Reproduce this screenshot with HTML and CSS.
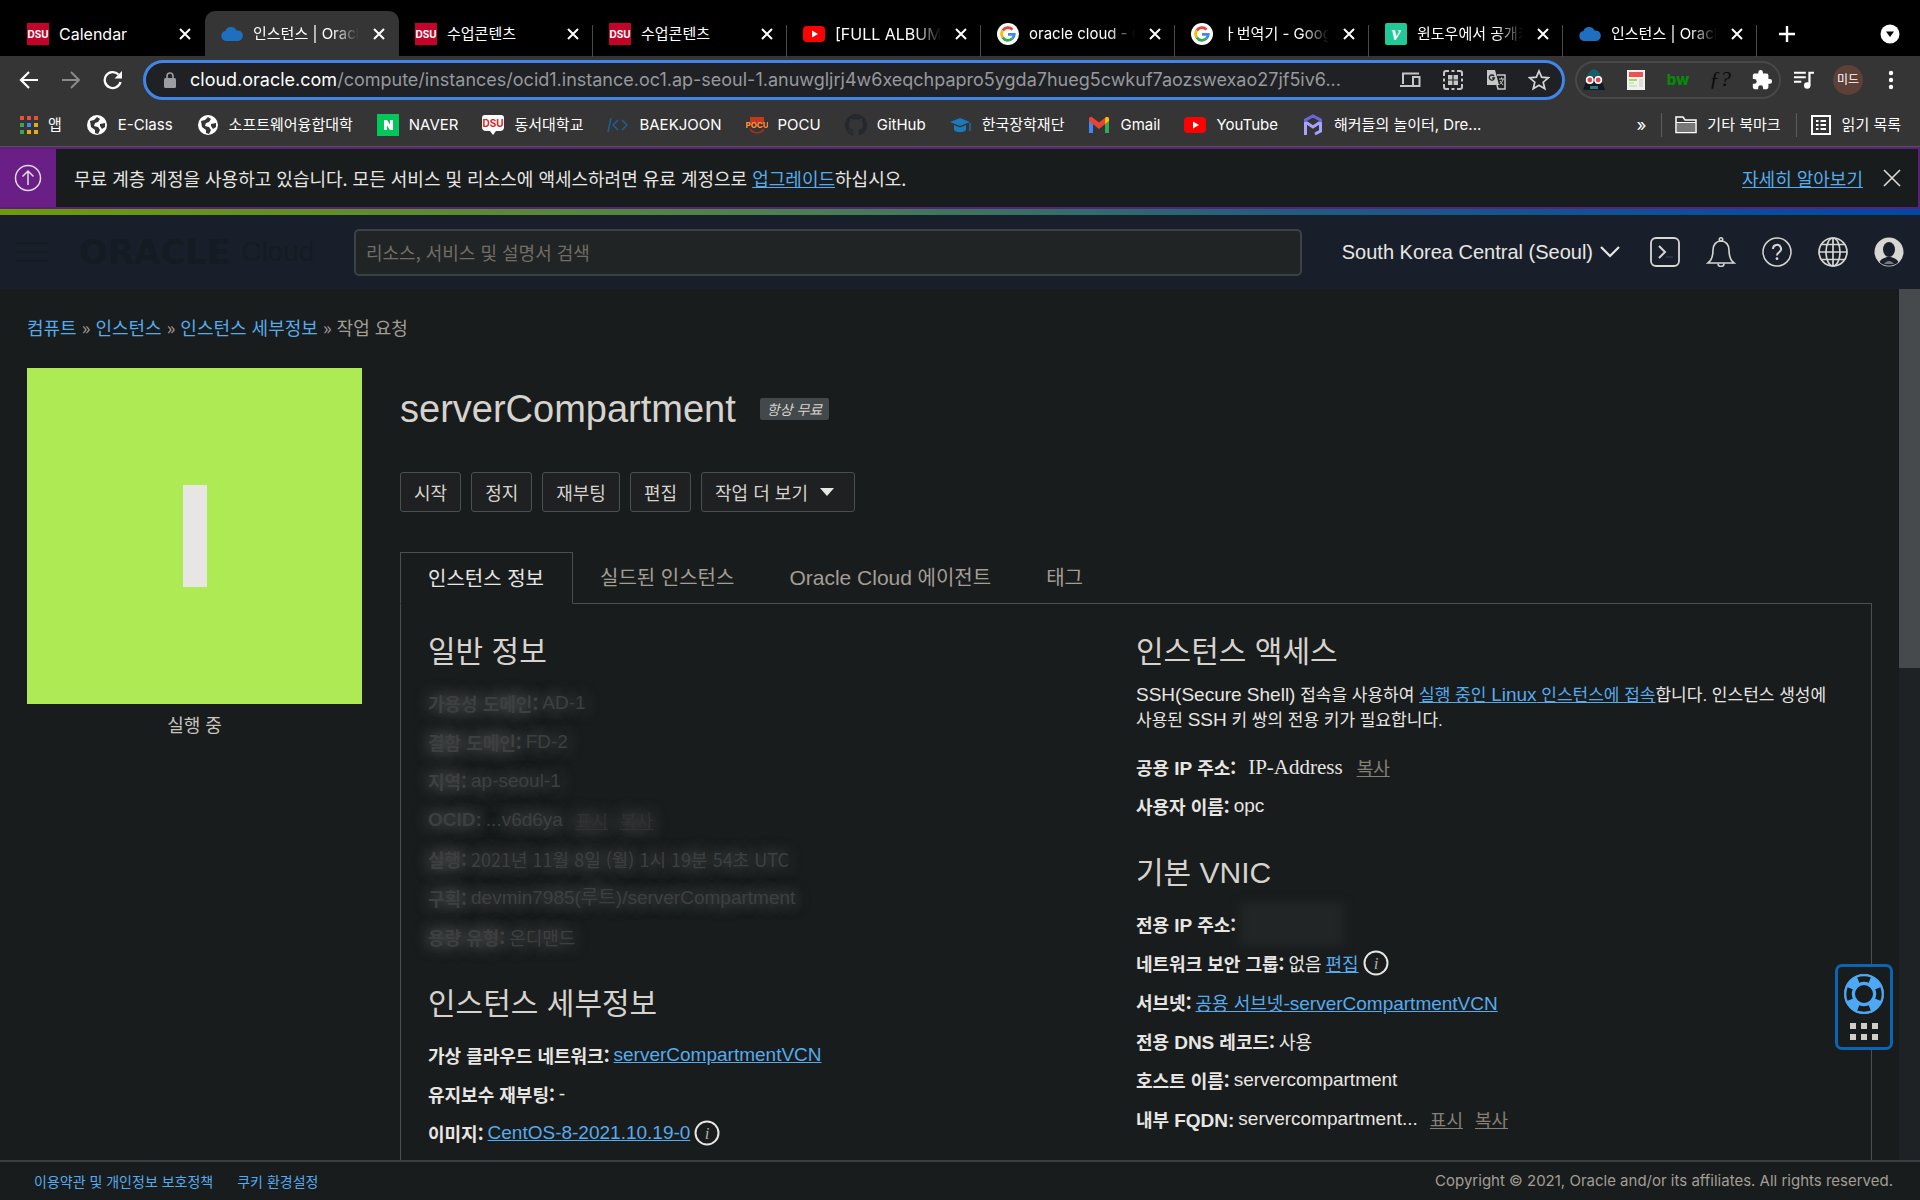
FILE: index.html
```html
<!DOCTYPE html>
<html lang="ko">
<head>
<meta charset="utf-8">
<title>인스턴스 | Oracle Cloud</title>
<meta name="viewport" content="width=device-width, initial-scale=1">
<link rel="stylesheet" href="styles.css">
</head>
<body>
<svg class="defs" aria-hidden="true">
  <symbol id="x" viewBox="0 0 12 12"><path d="M1 1l10 10M11 1L1 11" stroke="currentColor" stroke-width="2" fill="none"/></symbol>
  <symbol id="cloud" viewBox="0 0 22 22"><path d="M5 18a5 5 0 0 1-.6-9.900A6 6 0 0 1 15.500 7.500 5.300 5.300 0 0 1 17.500 18z" fill="#1f6fc0"/></symbol>
  <symbol id="dsu" viewBox="0 0 22 22"><path d="M0 0h22v22H0z" fill="#c4032b"/><text x="11" y="15" text-anchor="middle" font-size="10" font-weight="700" fill="#fff">DSU</text></symbol>
  <symbol id="youtube" viewBox="0 0 22 22"><rect y="3" width="22" height="16" rx="4" fill="#f00"/><path d="M9 7.500l6 3.500-6 3.500z" fill="#fff"/></symbol>
  <symbol id="google" viewBox="0 0 22 22"><circle cx="11" cy="11" r="11" fill="#fff"/><g fill="none" stroke-width="2.800"><path d="M5.700 7.500A6.300 6.300 0 0 1 15.500 6.600" stroke="#ea4335"/><path d="M5.700 14.500a6.300 6.300 0 0 1 0-7" stroke="#fbbc05"/><path d="M15.300 15.600a6.300 6.300 0 0 1-9.600-1.100" stroke="#34a853"/><path d="M11 11.300h6.300a6.300 6.300 0 0 1-2 4.300" stroke="#4285f4"/></g></symbol>
  <symbol id="globe-solid" viewBox="0 0 22 22"><circle cx="11" cy="11" r="10" fill="#fff"/><path d="M4 7l4-1 3-3 3 2-2 3-3 1-1 3 4 1 2 3-2 4-3-1v-3l-4-3zM14 10l5-1v4l-3 2-2-3z" fill="#353535"/></symbol>
  <symbol id="info" viewBox="0 0 26 26"><circle cx="13" cy="13" r="11.500" fill="none" stroke="#e8e6e3" stroke-width="2"/><text x="13" y="19" text-anchor="middle" font-family="Liberation Serif, serif" font-style="italic" font-size="17" fill="#b0aba3">i</text></symbol>
</svg>

<header class="browser">
  <nav class="tabs" aria-label="탭">
    <div class="tab latin"><svg class="fav"><use href="#dsu"/></svg><span class="title">Calendar</span><button class="close" aria-label="닫기"><svg><use href="#x"/></svg></button></div>
    <div class="tab active"><svg class="fav"><use href="#cloud"/></svg><span class="title fade">인스턴스 | Oracle Cloud</span><button class="close" aria-label="닫기"><svg><use href="#x"/></svg></button></div>
    <div class="tab line"><svg class="fav"><use href="#dsu"/></svg><span class="title">수업콘텐츠</span><button class="close" aria-label="닫기"><svg><use href="#x"/></svg></button></div>
    <div class="tab line"><svg class="fav"><use href="#dsu"/></svg><span class="title">수업콘텐츠</span><button class="close" aria-label="닫기"><svg><use href="#x"/></svg></button></div>
    <div class="tab line latin"><svg class="fav"><use href="#youtube"/></svg><span class="title fade">[FULL ALBUM]</span><button class="close" aria-label="닫기"><svg><use href="#x"/></svg></button></div>
    <div class="tab line"><svg class="fav"><use href="#google"/></svg><span class="title fade">oracle cloud - Google</span><button class="close" aria-label="닫기"><svg><use href="#x"/></svg></button></div>
    <div class="tab line"><svg class="fav"><use href="#google"/></svg><span class="title fade">ㅏ번역기 - Google 검색</span><button class="close" aria-label="닫기"><svg><use href="#x"/></svg></button></div>
    <div class="tab line"><svg class="fav" viewBox="0 0 22 22"><rect width="22" height="22" rx="2" fill="#20c997"/><text x="11" y="17" text-anchor="middle" font-family="Liberation Serif, serif" font-style="italic" font-weight="700" font-size="20" fill="#fff">v</text></svg><span class="title fade">윈도우에서 공개키 생성</span><button class="close" aria-label="닫기"><svg><use href="#x"/></svg></button></div>
    <div class="tab line"><svg class="fav"><use href="#cloud"/></svg><span class="title fade">인스턴스 | Oracle Cloud</span><button class="close" aria-label="닫기"><svg><use href="#x"/></svg></button></div>
    <button class="newtab" aria-label="새 탭"><svg viewBox="0 0 16 16"><path d="M8 0v16M0 8h16" stroke="#fff" stroke-width="2.400"/></svg></button>
    <button class="tabsearch" aria-label="탭 검색"><svg viewBox="0 0 20 20"><circle cx="10" cy="10" r="9.500" fill="#fff"/><path d="M6 7.500h8l-4 5.500z" fill="#000"/></svg></button>
  </nav>

  <div class="toolbar">
    <button aria-label="뒤로"><svg viewBox="0 0 20 20"><path d="M19 10H2M10 2l-8 8 8 8" fill="none" stroke="#fff" stroke-width="2.200"/></svg></button>
    <button aria-label="앞으로"><svg viewBox="0 0 20 20"><path d="M1 10h17M10 2l8 8-8 8" fill="none" stroke="#8b8b8b" stroke-width="2"/></svg></button>
    <button aria-label="새로고침"><svg viewBox="0 0 20 20"><path d="M17.500 12A8 8 0 1 1 15.500 4.500" fill="none" stroke="#fff" stroke-width="2.300"/><path d="M19 1v7.500h-7.500z" fill="#fff"/></svg></button>
    <div class="omnibox">
      <svg class="lock" viewBox="0 0 12 16"><path d="M3 7V4a3 3 0 0 1 6 0v3" fill="none" stroke="#9a9da1" stroke-width="1.600"/><rect y="6" width="12" height="10" rx="1.500" fill="#9a9da1"/></svg>
      <div class="url"><span class="host">cloud.oracle.com</span>/compute/instances/ocid1.instance.oc1.ap-seoul-1.anuwgljrj4w6xeqchpapro5ygda7hueg5cwkuf7aozswexao27jf5iv6...</div>
      <svg viewBox="0 0 22 22"><path d="M4 15V4.500h16M1 17h12" fill="none" stroke="#c4c7c5" stroke-width="2"/><rect x="14" y="8" width="6.500" height="9" fill="none" stroke="#c4c7c5" stroke-width="2"/></svg>
      <svg viewBox="0 0 22 22"><g fill="none" stroke="#c4c7c5" stroke-width="2"><path d="M2 7V4a2 2 0 0 1 2-2h3M15 2h3a2 2 0 0 1 2 2v3M20 15v3a2 2 0 0 1-2 2h-3M7 20H4a2 2 0 0 1-2-2v-3M9.500 2h3M9.500 20h3M2 9.500v3M20 9.500v3"/></g><path d="M6 6h4.400v4.400H6zM11.600 6H16v4.400h-4.400zM6 11.600h4.400V16H6zM11.600 11.600H16V16h-4.400z" fill="#c4c7c5"/></svg>
      <svg viewBox="0 0 22 22"><path d="M2 1h8l4 15H2z" fill="#c4c7c5"/><path d="M12 6h8v14h-7l-1-4" fill="none" stroke="#c4c7c5" stroke-width="1.500"/><path d="M14 10h5M16.500 8.500V10M18 10c-.5 3-2 4-3.500 5.500M15 12l3 4" stroke="#c4c7c5" fill="none"/><path d="M9 7a2.600 2.600 0 1 0 .5 2H7" fill="none" stroke="#202124" stroke-width="1.300"/></svg>
      <svg viewBox="0 0 22 22"><path d="M11 2l2.600 6.200 6.700.6-5.100 4.400 1.600 6.600-5.800-3.500-5.800 3.500 1.600-6.600-5.100-4.400 6.700-.6z" fill="none" stroke="#d5d7d6" stroke-width="1.700"/></svg>
    </div>
    <div class="extensions">
      <svg viewBox="0 0 22 22"><path d="M11 0c5 0 7 5 7 10l4 11H0L4 10C4 5 6 0 11 0z" fill="#0c1c22"/><path d="M11 0c4 0 6.500 4 7 8H4c.5-4 3-8 7-8z" fill="#1d5a63"/><circle cx="6.800" cy="11" r="4" fill="#fff"/><circle cx="15.200" cy="11" r="4" fill="#fff"/><circle cx="6.800" cy="11" r="2.400" fill="#e5484b"/><circle cx="15.200" cy="11" r="2.400" fill="#e5484b"/><path d="M8 17v3M10 17v3M12 17v3M14 17v3" stroke="#69c7e0"/></svg>
      <svg viewBox="0 0 22 22"><path d="M2 1h18v20H2z" fill="#f1f1ee"/><path d="M4 3h14v5H4z" fill="#ef5350"/><path d="M4 11h8" stroke="#a0d860" stroke-width="2"/><path d="M4 14h5M4 17h8" stroke="#b9d99a"/><path d="M14 10h4v8h-4z" fill="#dcdcdc"/></svg>
      <svg viewBox="0 0 22 22"><text x="11" y="16" text-anchor="middle" font-size="15" font-weight="800" fill="#088a08">bw</text></svg>
      <svg viewBox="0 0 22 22"><text x="11" y="17" text-anchor="middle" font-size="22" font-family="Liberation Serif, serif" font-style="italic" fill="#0c0c0c">ƒ?</text></svg>
      <svg viewBox="0 0 24 24"><path d="M20.500 11H19V7a2 2 0 0 0-2-2h-4V3.500a2.500 2.500 0 0 0-5 0V5H4a2 2 0 0 0-2 2v3.800h1.500a2.700 2.700 0 0 1 0 5.400H2V20a2 2 0 0 0 2 2h3.800v-1.500a2.700 2.700 0 0 1 5.400 0V22H17a2 2 0 0 0 2-2v-4h1.500a2.500 2.500 0 0 0 0-5z" fill="#fff"/></svg>
    </div>
    <button aria-label="미디어"><svg viewBox="0 0 22 22"><path d="M0 3h13M0 8h13M0 13h8" stroke="#fff" stroke-width="2.200"/><path d="M17 17V3h5" fill="none" stroke="#fff" stroke-width="2.400"/><circle cx="14.500" cy="17" r="3.500" fill="#fff"/></svg></button>
    <button class="avatar">미드</button>
    <button class="dots" aria-label="메뉴"><svg viewBox="0 0 6 22"><circle cx="3" cy="4" r="2.200" fill="#fff"/><circle cx="3" cy="11" r="2.200" fill="#fff"/><circle cx="3" cy="18" r="2.200" fill="#fff"/></svg></button>
  </div>

  <nav class="bookmarks" aria-label="북마크">
    <a href="#"><svg class="apps" viewBox="0 0 18 20"><path d="M0 1h4v4H0zM7 1h4v4H7zM14 1h4v4h-4z" fill="#e8503a"/><path d="M0 8h4v4H0zM0 15h4v4H0z" fill="#34a853"/><path d="M7 8h4v4H7z" fill="#4285f4"/><path d="M14 8h4v4h-4zM7 15h4v4H7zM14 15h4v4h-4z" fill="#e3ac1a"/></svg>앱</a>
    <a href="#"><svg><use href="#globe-solid"/></svg>E-Class</a>
    <a href="#"><svg><use href="#globe-solid"/></svg>소프트웨어융합대학</a>
    <a href="#"><svg viewBox="0 0 22 22"><path d="M0 0h22v22H0z" fill="#03c75a"/><path d="M7 16V6h3l3 4.600V6h3v10h-3l-3-4.600V16z" fill="#fff"/></svg>NAVER</a>
    <a href="#"><svg viewBox="0 0 22 22"><path d="M3 1h16a3 3 0 0 1 3 3v9a4 4 0 0 1-4 4h-4l-3 4-3-4H4a4 4 0 0 1-4-4V4a3 3 0 0 1 3-3z" fill="#fff"/><text x="11" y="13" text-anchor="middle" font-size="10" font-weight="700" fill="#d9251c">DSU</text></svg>동서대학교</a>
    <a href="#"><svg viewBox="0 0 22 22"><path d="M4 4L1 18M11 6l-5 5 5 5M15 6l5 5-5 5" fill="none" stroke="#1f5c92" stroke-width="1.600"/></svg>BAEKJOON</a>
    <a href="#"><svg viewBox="0 0 22 22"><path d="M4 3h14v6H4z" fill="#c8361a"/><path d="M4 15c3 5 11 5 14 0" fill="none" stroke="#a8301a" stroke-width="1.500"/><text x="11" y="14" text-anchor="middle" font-size="8" font-weight="800" fill="#ff8a3c">POCU</text></svg>POCU</a>
    <a href="#"><svg viewBox="0 0 16 16"><path d="M8 0C3.580 0 0 3.580 0 8c0 3.540 2.290 6.530 5.470 7.590.4.070.55-.17.55-.38 0-.19-.01-.82-.01-1.490-2.010.37-2.530-.49-2.690-.94-.09-.23-.48-.94-.82-1.130-.28-.15-.68-.52-.01-.53.63-.01 1.080.58 1.230.82.720 1.210 1.870.87 2.330.66.070-.52.280-.87.510-1.070-1.780-.2-3.640-.89-3.640-3.950 0-.87.310-1.590.82-2.150-.08-.2-.36-1.020.08-2.120 0 0 .67-.21 2.200.82a7.600 7.600 0 0 1 4 0c1.530-1.040 2.200-.82 2.200-.82.44 1.100.16 1.920.08 2.120.51.560.82 1.270.82 2.150 0 3.070-1.870 3.750-3.650 3.950.29.25.54.730.54 1.480 0 1.070-.01 1.930-.01 2.200 0 .21.150.46.55.38A8 8 0 0 0 16 8c0-4.420-3.580-8-8-8z" fill="#24292e"/></svg>GitHub</a>
    <a href="#"><svg viewBox="0 0 22 22"><path d="M0 8l10-4 10 4-10 4z" fill="#1f78b8"/><path d="M4 11v5c3 3 9 3 12 0v-5l-6 2.500z" fill="#1f78b8"/><path d="M20 9v8" stroke="#1f5f94" stroke-width="2"/></svg>한국장학재단</a>
    <a href="#"><svg viewBox="0 0 22 22"><path d="M1 19V5l4 3v11z" fill="#4285f4"/><path d="M17 19V8l4-3v14z" fill="#34a853"/><path d="M1 7V5a2 2 0 0 1 3.500-1.500L11 8.500l6.500-5A2 2 0 0 1 21 5v2l-10 8z" fill="#ea4335"/><path d="M17 4l1-.8A2 2 0 0 1 21 5v2l-4 3z" fill="#fbbc04"/></svg>Gmail</a>
    <a href="#"><svg><use href="#youtube"/></svg>YouTube</a>
    <a href="#"><svg viewBox="0 0 22 22"><path d="M3.500 21V8L11 13l7.500-5v9L13 20" fill="none" stroke="#a7a2fb" stroke-width="3"/><path d="M3.500 8V6L11 2l7.500 4v2" fill="none" stroke="#6a66dd" stroke-width="3"/></svg>해커들의 놀이터, Dre...</a>
    <button class="more" aria-label="북마크 더보기">»</button>
    <a class="sep" href="#"><svg viewBox="0 0 22 22"><path d="M1 18.500V3h7l2 3h11v12.500z" fill="none" stroke="#fff" stroke-width="1.500"/><path d="M2 9h18v9H2z" fill="#777"/><path d="M1 8.500h20" stroke="#fff"/></svg>기타 북마크</a>
    <a class="sep" href="#"><svg viewBox="0 0 22 22"><rect x="2" y="2" width="18" height="18" fill="none" stroke="#fff" stroke-width="2"/><path d="M6 7h2.500M6 11h2.500M6 15h2.500M10.500 7H16M10.500 11H16M10.500 15H16" stroke="#fff" stroke-width="2"/></svg>읽기 목록</a>
  </nav>
</header>

<aside class="banner">
  <div class="banner-icon"><svg viewBox="0 0 28 28"><g fill="none" stroke="#e6d9ec" stroke-width="1.500"><circle cx="14" cy="14" r="12.500"/><path d="M14 21V7M8.500 12.500L14 7l5.500 5.500"/></g></svg></div>
  <p>무료 계층 계정을 사용하고 있습니다. 모든 서비스 및 리소스에 액세스하려면 유료 계정으로 <a href="#">업그레이드</a>하십시오.</p>
  <a href="#">자세히 알아보기</a>
  <button aria-label="닫기"><svg viewBox="0 0 18 18"><path d="M1 1l16 16M17 1L1 17" stroke="#dedbd7" stroke-width="1.600"/></svg></button>
</aside>

<header class="console">
  <button class="menu" aria-label="메뉴"><svg viewBox="0 0 32 20"><path d="M0 1h32M0 10h32M0 19h32" stroke="#141b23" stroke-width="2"/></svg></button>
  <a class="logo" href="#"><b>ORACLE</b><span>Cloud</span></a>
  <input class="search" type="search" placeholder="리소스, 서비스 및 설명서 검색" aria-label="검색">
  <button class="region">South Korea Central (Seoul)<svg viewBox="0 0 20 12"><path d="M1 1l9 9 9-9" fill="none" stroke="#e8e6e3" stroke-width="2.200"/></svg></button>
  <div class="actions">
    <button aria-label="Cloud Shell"><svg viewBox="0 0 30 30"><rect x="1" y="1" width="28" height="28" rx="5" fill="none" stroke="#d8d6d2" stroke-width="1.800"/><path d="M9 9l6 6-6 6" fill="none" stroke="#d8d6d2" stroke-width="2"/><path d="M16 20h7" stroke="#343a42" stroke-width="1.500"/></svg></button>
    <button aria-label="알림"><svg viewBox="0 0 30 30"><g fill="none" stroke="#d8d6d2" stroke-width="1.600"><path d="M2 26h26c-4-3-5-7-5-13 0-5-3-9-8-9s-8 4-8 9c0 6-1 10-5 13z"/><path d="M12 26.500a3 3 0 0 0 6 0"/><circle cx="15" cy="2.500" r="1.700"/></g></svg></button>
    <button aria-label="도움말"><svg viewBox="0 0 30 30"><g fill="none" stroke="#d8d6d2" stroke-width="1.500"><circle cx="15" cy="15" r="14"/><path d="M11 12a4 4 0 1 1 6 3.300c-1.500.9-2 1.700-2 3.200" stroke-width="2"/></g><circle cx="15" cy="21.700" r="1.400" fill="#d8d6d2"/></svg></button>
    <button aria-label="언어"><svg viewBox="0 0 30 30"><g fill="none" stroke="#d8d6d2" stroke-width="1.700"><circle cx="15" cy="15" r="14"/><ellipse cx="15" cy="15" rx="7" ry="14"/><path d="M15 1v28M1 15h28M3.500 7.500h23M3.500 22.500h23"/></g></svg></button>
    <button aria-label="프로파일"><svg viewBox="0 0 30 30"><circle cx="15" cy="15" r="14.500" fill="#d8d6d2"/><ellipse cx="15" cy="12.500" rx="6" ry="7.500" fill="#181f2a"/><path d="M5.500 25c2-4 5.500-4 7.500-5h4c2 1 5.500 1 7.500 5-5 5-14 5-19 0z" fill="#181f2a"/><path d="M10 27c3-4 7-4 10 0z" fill="#777b80"/></svg></button>
  </div>
</header>

<div class="viewport">
  <main class="page">
    <nav class="crumbs"><a href="#">컴퓨트</a> » <a href="#">인스턴스</a> » <a href="#">인스턴스 세부정보</a> » 작업 요청</nav>
    <div class="layout">
      <section class="status">
        <div class="tile"><i></i></div>
        <p>실행 중</p>
      </section>
      <section class="detail">
        <div class="heading"><h1>serverCompartment</h1><em>항상 무료</em></div>
        <div class="buttons">
          <button>시작</button><button>정지</button><button>재부팅</button><button>편집</button><button class="dropdown">작업 더 보기<svg viewBox="0 0 14 8"><path d="M0 0h14L7 8z" fill="#e8e6e3"/></svg></button>
        </div>
        <div class="panel-tabs" role="tablist">
          <button role="tab" aria-selected="true" class="on">인스턴스 정보</button><button role="tab">실드된 인스턴스</button><button role="tab"><span class="en">Oracle Cloud</span> 에이전트</button><button role="tab">태그</button>
        </div>
        <div class="panel">
          <div>
            <h2>일반 정보</h2>
            <div class="rows hidden-info">
              <p><b>가용성 도메인:</b> <span class="en">AD-1</span></p>
              <p><b>결함 도메인:</b> <span class="en">FD-2</span></p>
              <p><b>지역:</b> <span class="en">ap-seoul-1</span></p>
              <p><b class="en">OCID:</b> <span class="en">...v6d6ya</span> <a class="act" href="#">표시</a><a class="act" href="#">복사</a></p>
              <p><b>실행:</b> 2021년 11월 8일 (월) 1시 19분 54초 UTC</p>
              <p><b>구획:</b> <span class="en">devmin7985(루트)/serverCompartment</span></p>
              <p><b>용량 유형:</b> 온디맨드</p>
            </div>
            <h2>인스턴스 세부정보</h2>
            <div class="rows">
              <p><b>가상 클라우드 네트워크:</b> <a class="en" href="#">serverCompartmentVCN</a></p>
              <p><b>유지보수 재부팅:</b> <span class="en">-</span></p>
              <p><b>이미지:</b> <a class="en" href="#">CentOS-8-2021.10.19-0</a><svg class="info"><use href="#info"/></svg></p>
            </div>
          </div>
          <div>
            <h2>인스턴스 액세스</h2>
            <p class="lead"><span class="en">SSH(Secure Shell)</span> 접속을 사용하여 <a href="#">실행 중인 <span class="en">Linux</span> 인스턴스에 접속</a>합니다. 인스턴스 생성에 사용된 <span class="en">SSH</span> 키 쌍의 전용 키가 필요합니다.</p>
            <div class="rows">
              <p><b>공용 <span class="en">IP</span> 주소:</b><span class="ip">IP-Address</span><a class="act" href="#">복사</a></p>
              <p><b>사용자 이름:</b> <span class="en">opc</span></p>
            </div>
            <h2>기본 <span class="vnic">VNIC</span></h2>
            <div class="rows">
              <p><b>전용 <span class="en">IP</span> 주소:</b><span class="smudge"></span></p>
              <p><b>네트워크 보안 그룹:</b> 없음 <a href="#">편집</a><svg class="info"><use href="#info"/></svg></p>
              <p><b>서브넷:</b> <a href="#">공용 서브넷<span class="en">-serverCompartmentVCN</span></a></p>
              <p><b>전용 <span class="en">DNS</span> 레코드:</b> 사용</p>
              <p><b>호스트 이름:</b> <span class="en">servercompartment</span></p>
              <p><b>내부 <span class="en">FQDN:</span></b> <span class="en">servercompartment...</span><a class="act" href="#">표시</a><a class="act" href="#">복사</a></p>
            </div>
          </div>
        </div>
      </section>
    </div>
  </main>
  <div class="scrollbar"><i></i></div>
  <button class="support" aria-label="지원">
    <svg viewBox="0 0 40 40"><circle cx="20" cy="20" r="14.500" fill="none" stroke="#4da9f5" stroke-width="11"/><g stroke="#191c1d" stroke-width="7" fill="none"><path d="M14 5.500a15.700 15.700 0 0 1 12 0M14 34.500a15.700 15.700 0 0 0 12 0M5.500 14a15.700 15.700 0 0 0 0 12M34.500 14a15.700 15.700 0 0 1 0 12"/></g><circle cx="20" cy="20" r="18.700" fill="none" stroke="#4da9f5" stroke-width="2"/><circle cx="20" cy="20" r="10.500" fill="none" stroke="#4da9f5" stroke-width="2"/></svg>
    <svg class="grip" viewBox="0 0 28 17"><path d="M0 0h6v6H0zM11 0h6v6h-6zM22 0h6v6h-6zM0 11h6v6H0zM11 11h6v6h-6zM22 11h6v6h-6z" fill="#d0cdc8"/></svg>
  </button>
</div>

<footer class="footer">
  <a href="#">이용약관 및 개인정보 보호정책</a>
  <a href="#">쿠키 환경설정</a>
  <small>Copyright © 2021, Oracle and/or its affiliates. All rights reserved.</small>
</footer>
</body>
</html>
```
FILE: styles.css
```css
* { box-sizing: border-box; }
body {
  margin: 0;
  height: 100vh;
  display: flex;
  flex-direction: column;
  overflow: hidden;
  background: #191c1d;
  color: #e8e6e3;
  font: 18px/26px "Noto Sans CJK KR", sans-serif;
}
p, h1, h2 { margin: 0; font-weight: 400; }
a { color: #56abec; }
button { padding: 0; border: 0; background: none; color: inherit; font: inherit; }
svg { display: block; flex: none; }
.defs { display: none; }

/* browser chrome */
.browser { flex: none; background: #353535; color: #fff; font: 15px/24px Inter, "Noto Sans CJK KR", sans-serif; }
.tabs { display: flex; height: 56px; padding: 11px 20px 0 11px; background: #000; }
.tab { flex: 0 1 194px; min-width: 0; display: flex; align-items: center; padding: 0 9px 0 16px; position: relative; }
.tab.latin { font-size: 16px; }
.tab.active { background: #353535; border-radius: 10px 10px 0 0; }
.tab.line::after { content: ""; position: absolute; right: 0; top: 14px; height: 32px; border-right: 1px solid #4a4a4a; }
.fav { width: 22px; height: 22px; }
.title { flex: 1; min-width: 0; margin: 0 9px 0 10px; overflow: hidden; white-space: nowrap; }
.fade { mask-image: linear-gradient(90deg, #000 75%, transparent); }
.close svg { width: 12px; height: 12px; }
.tab .close { padding: 0 5px; }
.newtab { padding: 0 22px; }
.newtab svg { width: 16px; height: 16px; }
.tabsearch { margin-left: auto; }
.tabsearch svg { width: 20px; height: 20px; }

.toolbar { display: flex; align-items: center; height: 48px; padding: 0 26px 0 19px; gap: 22px; }
.toolbar > button svg { width: 20px; height: 20px; }
.omnibox { flex: 1; min-width: 0; height: 40px; margin: 0 -12px 0 -2px; padding: 0 12px 0 18px; display: flex; align-items: center; gap: 21px; border: 3px solid #4285e8; border-radius: 20px; background: #202124; }
.omnibox svg { width: 22px; height: 22px; }
.omnibox .lock { width: 12px; height: 18px; margin-right: -7px; }
.url { flex: 1; min-width: 0; overflow: hidden; white-space: nowrap; color: #96999d; font-size: 18px; }
.host { color: #fff; }
.extensions { display: flex; align-items: center; gap: 20px; height: 38px; padding: 0 6px; border: 2px solid #484848; border-radius: 19px; }
.extensions svg { width: 22px; height: 22px; }
.extensions + button { margin-left: -9px; }
.avatar { width: 30px; height: 30px; margin: 0 -3px; border-radius: 50%; background: #5d4037; font-size: 12px; }
.toolbar .dots svg { width: 6px; height: 22px; }
.dots { margin-left: 6px; }

.bookmarks { display: flex; align-items: center; gap: 24px; height: 43px; padding: 0 19px 0 20px; border-bottom: 1px solid #555; white-space: nowrap; }
.bookmarks a { display: flex; align-items: center; gap: 10px; color: inherit; text-decoration: none; }
.bookmarks svg { width: 22px; height: 22px; }
.bookmarks .apps { width: 18px; height: 20px; }
.bookmarks .more { margin-left: auto; font-size: 17px; }
.bookmarks .sep { margin-left: -9px; padding-left: 13px; border-left: 1px solid #5c5c5c; }

/* upgrade banner */
.banner { flex: none; display: flex; align-items: center; height: 62px; border: 2px solid #5d2079; border-left: 0; padding-right: 17px; }
.banner-icon { align-self: stretch; width: 56px; margin-right: 18px; display: grid; place-items: center; background: #691f86; }
.banner-icon svg { width: 28px; height: 28px; }
.banner p { flex: 1; }
.banner button { margin-left: 20px; }
.banner button svg { width: 18px; height: 18px; }

/* console header */
.console { flex: none; display: flex; align-items: center; height: 80px; padding: 0 16px; background: #181f2a; border-top: 6px solid; border-image: linear-gradient(90deg, #6f9a0a, #4a8050 42%, #1f5c80 68%, #0048a8) 1; }
.menu svg { width: 32px; height: 20px; }
.logo { width: 275px; margin-left: 31px; display: flex; align-items: center; gap: 11px; color: #141b23; text-decoration: none; font: 28px/40px "Liberation Sans", sans-serif; }
.logo b { font: 700 34px/40px "DejaVu Sans", sans-serif; }
.search { flex: 1; min-width: 0; height: 47px; padding: 0 10px; border: 2px solid #3c4144; border-radius: 5px; background: #212425; color: #e8e6e3; font: inherit; }
.search::placeholder { color: #716d66; opacity: 1; }
.region { display: flex; align-items: center; gap: 7px; margin: 0 30px 0 40px; font: 20px/26px "Liberation Sans", sans-serif; }
.region svg { width: 20px; height: 12px; }
.actions { display: flex; gap: 26px; }
.actions svg { width: 30px; height: 30px; }

/* page */
.viewport { flex: 1; min-height: 0; display: flex; overflow: hidden; position: relative; }
.page { flex: 1; min-width: 0; padding: 25px 27px 0; }
.crumbs { color: #a39e94; }
.crumbs a { text-decoration: none; }
.layout { display: flex; gap: 38px; margin-top: 28px; }
.status { flex: none; width: 335px; text-align: center; }
.tile { height: 336px; display: grid; place-items: center; background: #aeea53; }
.tile i { width: 24px; height: 102px; background: #e8e6e3; }
.status p { margin-top: 7px; color: #c9c5be; }
.detail { flex: 1; min-width: 0; }
.heading { display: flex; align-items: center; gap: 24px; height: 82px; color: #d6d3ce; }
h1 { font: 38px/48px "Liberation Sans", sans-serif; }
.heading em { padding: 0 7px; border-radius: 2px; background: #43484b; font-size: 14px; line-height: 22px; }
.buttons { display: flex; gap: 10px; margin-top: 22px; }
.buttons button { height: 40px; padding: 0 13px; border: 1px solid #4a4f52; border-radius: 3px; background: #1e2021; color: #d6d3ce; }
.buttons .dropdown { display: flex; align-items: center; gap: 12px; padding-right: 20px; }
.dropdown svg { width: 14px; height: 8px; }
.panel-tabs { display: flex; margin-top: 40px; font-size: 20px; color: #a39e94; }
.panel-tabs button { height: 52px; padding: 0 28px 2px 27px; border-bottom: 1px solid #4a4f52; }
.panel-tabs .on { padding-top: 2px; border: 1px solid #4a4f52; border-bottom-color: transparent; color: #e8e6e3; }
.panel-tabs::after { content: ""; flex: 1; border-bottom: 1px solid #4a4f52; }
.panel { display: grid; grid-template-columns: 1fr 1fr; padding: 25px 27px 80px; border: 1px solid #4a4f52; border-top: 0; }
h2 { margin-bottom: 14px; color: #d6d3ce; font-size: 30px; line-height: 40px; }
.rows { margin-bottom: 25px; }
.rows p { display: flex; align-items: center; height: 39px; gap: 4px; white-space: nowrap; }
.en { font-family: "Liberation Sans", "Noto Sans CJK KR", sans-serif; font-size: 19px; line-height: 1; }
.panel-tabs .en { font-size: 21px; }
.vnic { font-family: "Liberation Sans", sans-serif; line-height: 1; }
.act { margin-left: 8px; color: #857f76; }
.info { width: 26px; height: 26px; }
.lead { margin-bottom: 14px; font: 17px/25px "Liberation Sans", "Noto Sans CJK KR", sans-serif; }
.ip { margin: 0 2px 0 8px; font: 21px/26px "Liberation Serif", serif; }
.hidden-info, .hidden-info a { color: #3d4041; text-shadow: 0 0 16px #777; }
.hidden-info a { color: #30322f; }
.smudge { width: 104px; height: 44px; background: #222526; filter: blur(5px); }
.scrollbar { flex: none; width: 21px; background: #1e2224; }
.scrollbar i { display: block; height: 379px; background: #464a4c; }
.support { position: absolute; right: 27px; bottom: 110px; width: 58px; padding: 7px 0; display: grid; justify-items: center; gap: 9px; border: 3px solid #0a66b5; border-radius: 7px; background: #191c1d; }
.support svg { width: 40px; height: 40px; }
.support .grip { width: 28px; height: 17px; }

.footer { flex: none; display: flex; align-items: center; gap: 24px; height: 40px; padding: 0 27px 0 34px; border-top: 2px solid #3a3e40; font-size: 14px; }
.footer a { text-decoration: none; }
.footer small { margin-left: auto; color: #a39e94; font: 15px/24px Inter, sans-serif; }
```
